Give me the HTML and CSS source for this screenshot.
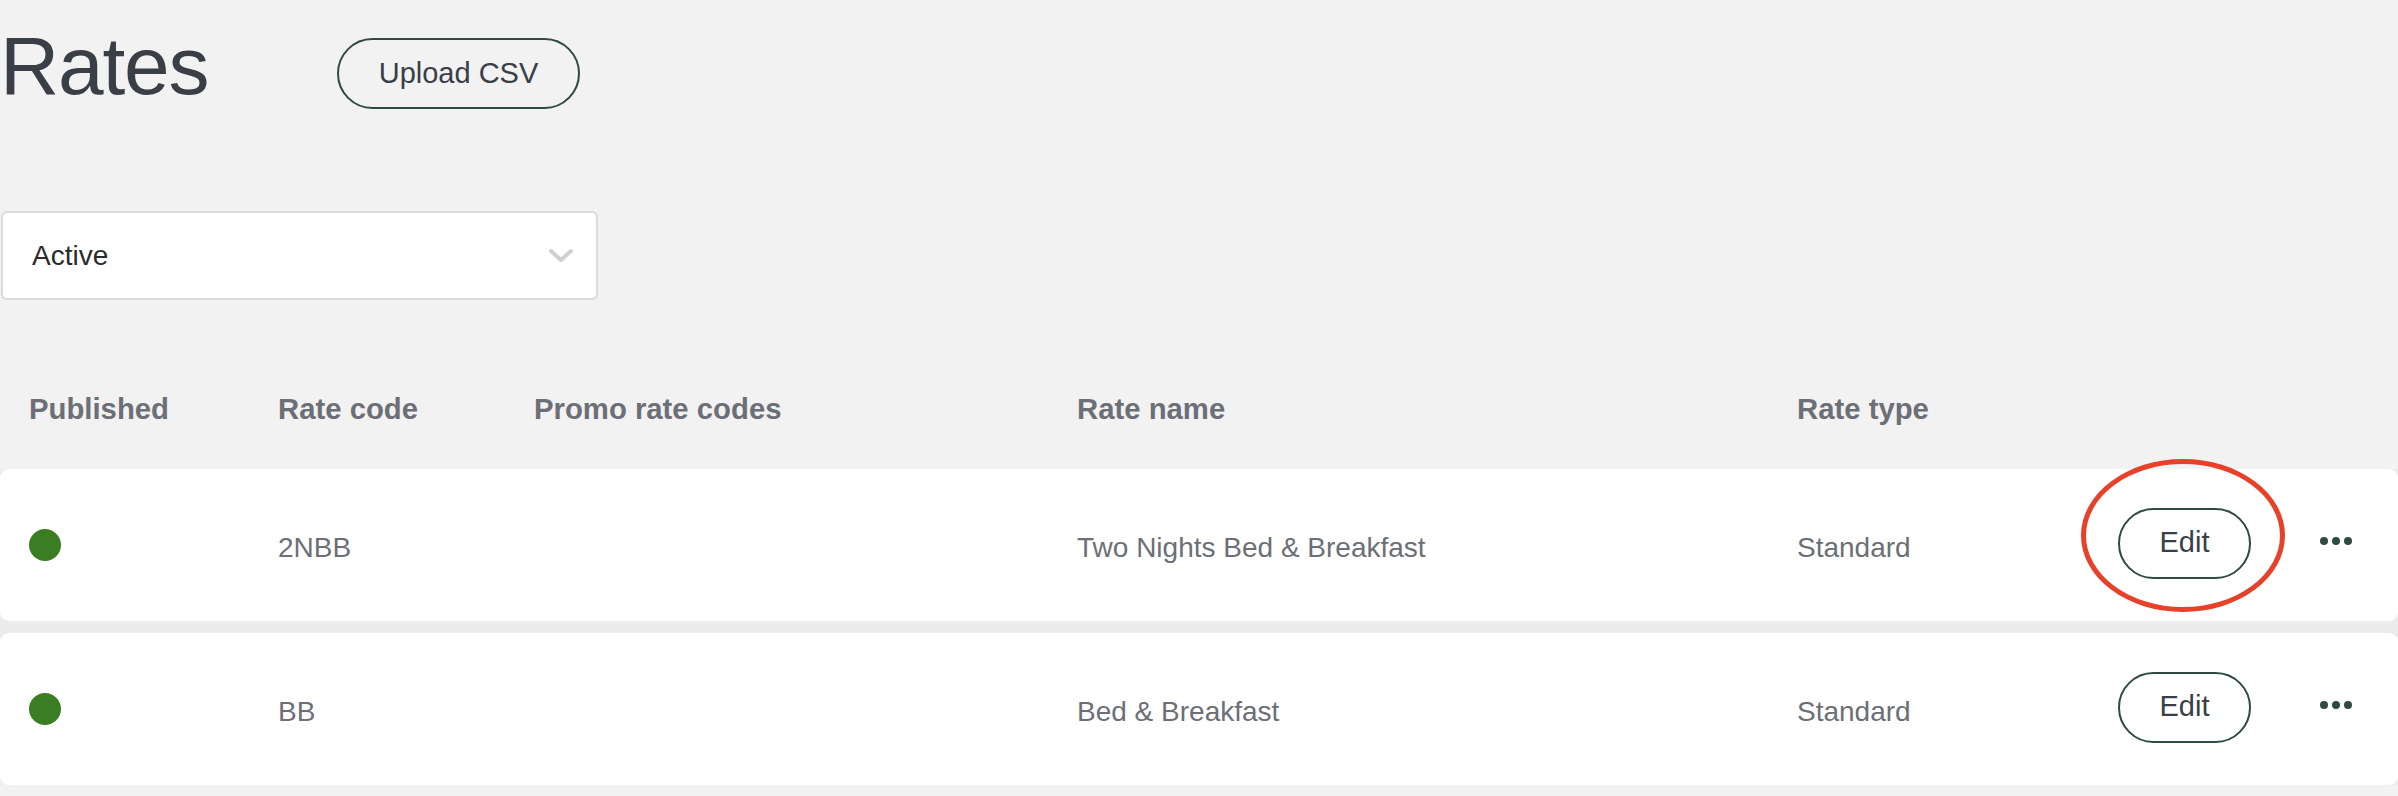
FILE: index.html
```html
<!DOCTYPE html>
<html lang="en">
<head>
    <meta charset="UTF-8">
    <meta name="viewport" content="width=device-width, initial-scale=1.0">
    <title>Rates</title>
    <link rel="stylesheet" href="styles.css">
</head>
<body>
    <header class="page-header">
        <h1>Rates</h1>
        <button type="button" class="btn-outline btn-upload">Upload CSV</button>
    </header>

    <div class="filter">
        <span>Active</span>
        <svg class="chevron" width="26" height="16" viewBox="0 0 26 16">
            <polyline points="3,3 13,12 23,3" fill="none" stroke="#cfd0d3" stroke-width="4" stroke-linecap="round" stroke-linejoin="round"/>
        </svg>
    </div>

    <div class="rates-table">
        <div class="table-head">
            <div>Published</div>
            <div>Rate code</div>
            <div>Promo rate codes</div>
            <div>Rate name</div>
            <div>Rate type</div>
            <div></div>
        </div>

        <div class="table-body">
            <div class="rate-row">
                <div><span class="status-dot"></span></div>
                <div class="cell">2NBB</div>
                <div class="cell"></div>
                <div class="cell">Two Nights Bed &amp; Breakfast</div>
                <div class="cell">Standard</div>
                <div class="actions">
                    <button type="button" class="btn-outline btn-edit">Edit</button>
                    <span class="more"><i></i><i></i><i></i></span>
                </div>
                <!-- annotation drawn over the first edit button -->
                <span class="highlight"></span>
            </div>

            <div class="rate-row">
                <div><span class="status-dot"></span></div>
                <div class="cell">BB</div>
                <div class="cell"></div>
                <div class="cell">Bed &amp; Breakfast</div>
                <div class="cell">Standard</div>
                <div class="actions">
                    <button type="button" class="btn-outline btn-edit">Edit</button>
                    <span class="more"><i></i><i></i><i></i></span>
                </div>
            </div>
        </div>
    </div>
</body>
</html>
```

FILE: styles.css
```css
body {
    margin: 0;
    background-color: #f2f2f2;
    font-family: "Liberation Sans", Arial, sans-serif;
    color: #3a3f47;
    overflow: hidden;
}

.page-header {
    display: flex;
    align-items: flex-start;
    padding-top: 22px;
}

h1 {
    margin: 0;
    padding-top: 3px;
    width: 337px;
    height: 79px;
    font-size: 82px;
    line-height: 82px;
    font-weight: normal;
    letter-spacing: -1.2px;
    color: #3a3f47;
}

.btn-outline {
    font-family: "Liberation Sans", Arial, sans-serif;
    font-size: 29px;
    color: #3a3f47;
    background: transparent;
    border: 2px solid #2f4a3e;
    border-radius: 40px;
    height: 71px;
    cursor: pointer;
}

.btn-upload {
    margin-top: 16px;
    width: 243px;
}

.filter {
    display: flex;
    align-items: center;
    justify-content: space-between;
    box-sizing: border-box;
    width: 597px;
    height: 89px;
    margin: 102px 0 0 1px;
    padding: 0 22px 0 29px;
    background-color: #fff;
    border: 2px solid #dadbdf;
    border-radius: 6px;
    font-size: 28px;
    color: #2b2b2b;
}

.table-head,
.rate-row {
    display: grid;
    grid-template-columns: 249px 256px 543px 720px 321px 1fr;
    align-items: center;
    padding-left: 29px;
}

.table-head {
    margin-top: 91px;
    height: 36px;
    line-height: 36px;
    font-size: 29.3px;
    font-weight: bold;
    color: #6c6f76;
}

.table-body {
    margin-top: 42px;
    display: flex;
    flex-direction: column;
    gap: 12px;
    background-color: #ececec;
}

.rate-row {
    position: relative;
    height: 152px;
    background-color: #fff;
    border-radius: 9px;
    font-size: 28px;
    color: #6c6f76;
}

.cell {
    padding-top: 5px;
}

.status-dot {
    display: block;
    width: 32px;
    height: 32px;
    border-radius: 50%;
    background-color: #3a7d23;
}

.actions {
    display: flex;
    align-items: center;
}

.btn-edit {
    width: 133px;
    margin-top: -3px;
    padding-bottom: 3px;
}

.more {
    display: flex;
    gap: 4px;
    margin-left: 69px;
    margin-top: -8px;
}

.more i {
    width: 8px;
    height: 8px;
    border-radius: 50%;
    background-color: #2f4a3e;
}

.highlight {
    position: absolute;
    left: 2081px;
    top: -10px;
    width: 204px;
    height: 153px;
    box-sizing: border-box;
    border: 5px solid #e8412a;
    border-radius: 50%;
    pointer-events: none;
}
```
